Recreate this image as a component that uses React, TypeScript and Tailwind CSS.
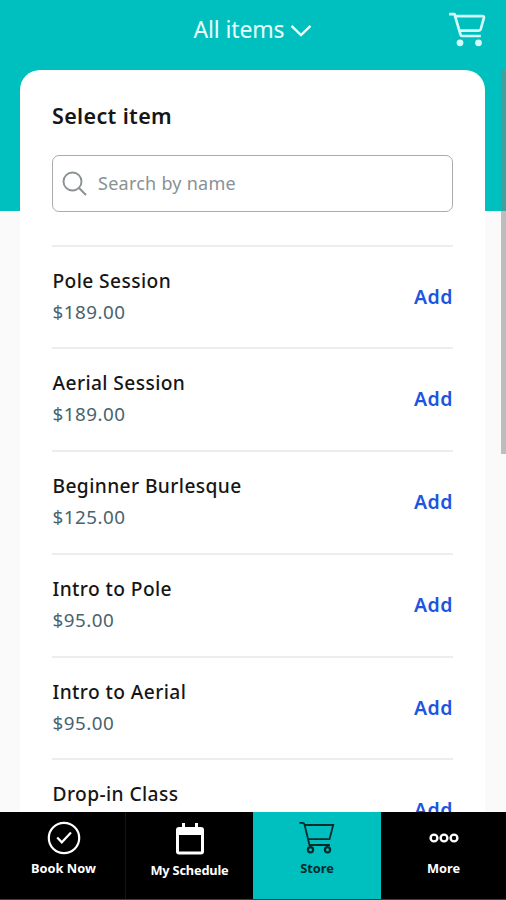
type Item = { name: string; price?: string };

const ITEMS: Item[] = [
  { name: 'Pole Session', price: '$189.00' },
  { name: 'Aerial Session', price: '$189.00' },
  { name: 'Beginner Burlesque', price: '$125.00' },
  { name: 'Intro to Pole', price: '$95.00' },
  { name: 'Intro to Aerial', price: '$95.00' },
  { name: 'Drop-in Class' },
];

// ========================================
// Icons
// ========================================

function HeaderCart() {
  return (
    <svg className="w-[38px] h-[36px]" viewBox="0 0 38 36" fill="none" stroke="#d4fbfb" strokeWidth="2.700" strokeLinejoin="round">
      <path d="M1 3.200h5.500l6 20.500q.3 1.300 1.800 1.300h18.500" />
      <path d="M7.500 5.200h27q1.800 0 1.400 1.600l-3.100 11.200q-.4 1.600-2 1.600H11.500" />
      <circle cx="12" cy="31.800" r="3.400" fill="#d4fbfb" stroke="none" />
      <circle cx="30.500" cy="31.800" r="3.400" fill="#d4fbfb" stroke="none" />
    </svg>
  );
}

function BookIcon() {
  return (
    <svg className="w-[34px] h-[34px]" viewBox="0 0 34 34" fill="none" stroke="#fff" strokeWidth="2.200">
      <circle cx="17" cy="17" r="15.200" />
      <path d="M10.200 16.500l4.600 4.800 9.200-9.700" />
    </svg>
  );
}

function CalendarIcon() {
  return (
    <svg className="w-[30px] h-[34px]" viewBox="0 0 30 34">
      <path
        fill="#fff"
        fillRule="evenodd"
        d="M7 1h3v4h10V1h3v4h3a3 3 0 0 1 3 3v21.500a3 3 0 0 1-3 3H4a3 3 0 0 1-3-3V8a3 3 0 0 1 3-3h3zM4 13v16.500h22V13z"
      />
    </svg>
  );
}

function StoreCart() {
  return (
    <svg className="w-[36px] h-[34px]" viewBox="0 0 36 34" fill="none" stroke="#002b2c" strokeWidth="1.800">
      <path d="M.5 1.800h3q1.500 0 2 1.800l5 20.400h20.500" />
      <path d="M6 4h28.200l-3.700 14.200H9.500" />
      <circle cx="11.500" cy="28.700" r="2.600" strokeWidth="2.200" />
      <circle cx="28.500" cy="28.700" r="2.600" strokeWidth="2.200" />
    </svg>
  );
}

function MoreIcon() {
  return (
    <svg className="w-[30px] h-[10px]" viewBox="0 0 30 10" fill="none" stroke="#fff" strokeWidth="2.400">
      <circle cx="5" cy="5" r="3.400" />
      <circle cx="15" cy="5" r="3.400" />
      <circle cx="25" cy="5" r="3.400" />
    </svg>
  );
}

// ========================================
// Sections
// ========================================

function TopBar() {
  return (
    <header className="grid grid-cols-[1fr_auto_1fr] h-[70px] shrink-0 pr-[20px]">
      <span />
      <button className="flex items-start gap-[6px] pt-[13px] pl-[20px] text-[#e9ffff]">
        <span className="text-[23px] leading-[32px] tracking-[-0.15px]">All items</span>
        <svg className="w-[22px] h-[14px] mt-[11px]" viewBox="0 0 22 14" fill="none" stroke="currentColor" strokeWidth="2.400">
          <path d="M1.500 1.800l9.500 9.200 9.500-9.200" />
        </svg>
      </button>
      <div className="flex justify-end pt-[11px]">
        <HeaderCart />
      </div>
    </header>
  );
}

function SearchBox() {
  return (
    <div className="flex items-center h-[57px] border border-[#a9acad] rounded-[7px] pl-[9px] gap-[10px]">
      <svg className="w-[26px] h-[26px]" viewBox="0 0 26 26" fill="none" stroke="#8b9092" strokeWidth="1.900">
        <circle cx="10.500" cy="10.500" r="9" />
        <path d="M17 17l7 7" />
      </svg>
      <span className="text-[18px] leading-[24px] tracking-[0.25px] text-[#899194] pb-[1px]">Search by name</span>
    </div>
  );
}

function ItemRow({ name, price }: Item) {
  return (
    <li className="flex items-start justify-between h-[102.750px] shrink-0 border-t-2 border-[#ededed]">
      <div className="pt-[18px] pl-[0.5px]">
        <p className="text-[19.200px] leading-[32px] tracking-[0.4px] font-medium text-[#161616]">{name}</p>
        {price && <p className="text-[18.800px] leading-[31px] tracking-[0.500px] text-[#49636d]">{price}</p>}
      </div>
      <button className="pt-[36px] text-[19.500px] leading-[28px] tracking-[0.5px] font-semibold text-[#1c55e0]">Add</button>
    </li>
  );
}

function BottomNav() {
  return (
    <nav className="grid grid-cols-[126px_127px_128px_125px] h-[88px] shrink-0 bg-black border-b border-[#00585a] text-white text-[12.800px] leading-[16px] font-bold">
      <div className="flex flex-col items-center pt-[9px] pl-[2px] gap-[5px] border-r border-[#151515]">
        <BookIcon />
        <span>Book Now</span>
      </div>
      <div className="flex flex-col items-center pt-[10px] gap-[6px]">
        <CalendarIcon />
        <span className="tracking-[-0.2px]">My Schedule</span>
      </div>
      <div className="flex flex-col items-center pt-[9px] gap-[5px] bg-[#00bfbf] text-[#002b2c]">
        <StoreCart />
        <span>Store</span>
      </div>
      <div className="flex flex-col items-center pt-[21px] gap-[17px]">
        <MoreIcon />
        <span>More</span>
      </div>
    </nav>
  );
}

export default function App() {
  return (
    <div className="relative flex flex-col w-[506px] h-[900px] overflow-hidden bg-[linear-gradient(#00bfbf_211px,#fafafa_211px)] font-['Noto_Sans',sans-serif]">
      <TopBar />
      <main className="flex flex-col flex-1 min-h-0 overflow-hidden ml-[20px] w-[465px] rounded-t-[20px] bg-white px-[32px] pt-[30px]">
        <h1 className="text-[21.500px] leading-[32px] tracking-[0.35px] font-semibold text-[#161616]">Select item</h1>
        <div className="mt-[23px]">
          <SearchBox />
        </div>
        <ul className="flex flex-col mt-[32.500px]">
          {ITEMS.map((item) => (
            <ItemRow key={item.name} {...item} />
          ))}
        </ul>
      </main>
      <BottomNav />
      <div className="absolute right-0 top-[70px] w-[5px] h-[384px] bg-[#808080]/50" />
    </div>
  );
}
